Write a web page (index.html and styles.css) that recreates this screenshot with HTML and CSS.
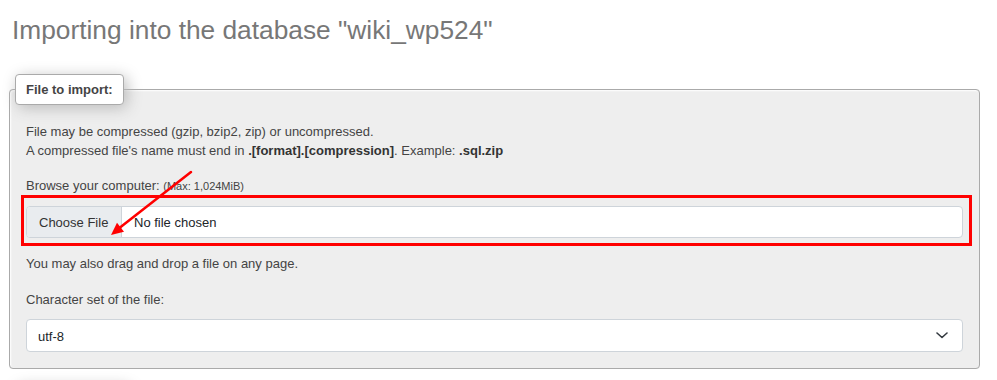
FILE: index.html
```html
<!DOCTYPE html>
<html>
<head>
<meta charset="utf-8">
<link rel="stylesheet" href="styles.css">
</head>
<body>
<div class="page">
  <h2 class="title">Importing into the database "wiki_wp524"</h2>

  <fieldset class="box">
    <legend class="box-legend">File to import:</legend>
    <p class="info">File may be compressed (gzip, bzip2, zip) or uncompressed.<br>A compressed file's name must end in <b>.[format].[compression]</b>. Example: <b>.sql.zip</b></p>

    <div class="field-label">Browse your computer: <small class="max">(Max: 1,024MiB)</small></div>
    <div class="file-wrap">
      <div class="file-input">
        <span class="file-btn">Choose File</span>
        <span class="file-name">No file chosen</span>
      </div>
      <div class="highlight"></div>
    </div>

    <p class="hint">You may also drag and drop a file on any page.</p>

    <div class="field-label charset-label">Character set of the file:</div>
    <div class="select">
      <span class="select-value">utf-8</span>
      <svg class="chevron" width="12" height="7" viewBox="0 0 12 7"><path d="M1 1 L6 5.5 L11 1" fill="none" stroke="#343a40" stroke-width="1.6" stroke-linecap="round" stroke-linejoin="round"/></svg>
    </div>
  </fieldset>

  <fieldset class="box next-box">
    <legend class="box-legend empty-legend"></legend>
    <div class="next-body"></div>
  </fieldset>

  <svg class="arrow" width="997" height="380" viewBox="0 0 997 380">
    <line x1="191" y1="157" x2="120" y2="212.5" stroke="#f00" stroke-width="2.5" stroke-linecap="round"/>
    <polygon points="111,220 124,216.8 117,207.8" fill="#f00"/>
  </svg>
</div>
</body>
</html>
```

FILE: styles.css
```css
html, body {
  margin: 0;
  padding: 0;
  background: #fff;
}

body {
  font-family: "Liberation Sans", Arial, sans-serif;
  font-size: 13px;
  color: #444;
}

.page {
  position: relative;
  padding: 0 17px 0 9px;
}

.title {
  margin: 15px 0 0 3px;
  font-size: 26.3px;
  line-height: 31px;
  font-weight: normal;
  color: #777;
}

.box {
  margin: 28px 0 0 0;
  padding: 0 16px 16px 16px;
  border: 1px solid #aaa;
  border-radius: 4px;
  background: #eee;
  box-shadow: 1px 1px 2px #fff inset;
  min-width: 0;
}

.box-legend {
  margin-left: -11px;
  padding: 0 10px;
  line-height: 29px;
  font-weight: bold;
  color: #444;
  background: #fff;
  border: 1px solid #aaa;
  border-radius: 4px;
  box-shadow: 3px 3px 15px #bbb;
}

.empty-legend {
  width: 90px;
  height: 29px;
}

.info {
  margin: 17px 0 0 0;
  line-height: 19px;
}

.info b {
  color: #333;
}

.field-label {
  margin-top: 16px;
  line-height: 19px;
}

.max {
  font-size: 11px;
}

.file-wrap {
  position: relative;
  margin-top: 10px;
}

.file-input {
  display: flex;
  height: 30px;
  border: 1px solid #ced4da;
  border-radius: 4px;
  background: #fff;
  overflow: hidden;
  color: #212529;
}

.file-btn {
  display: flex;
  align-items: center;
  padding: 0 12px;
  width: 70px;
  background: #e9ecef;
  border-right: 1px solid #ced4da;
  color: #333;
}

.file-name {
  display: flex;
  align-items: center;
  padding-left: 12px;
}

.highlight {
  position: absolute;
  left: -5px;
  right: -9px;
  top: -11px;
  bottom: -8px;
  border: 3px solid #f00;
}

.hint {
  margin: 16px 0 0 0;
  line-height: 19px;
}

.charset-label {
  margin-top: 17px;
}

.select {
  display: flex;
  align-items: center;
  justify-content: space-between;
  margin-top: 10px;
  height: 31px;
  padding: 0 14px 0 11px;
  border: 1px solid #ced4da;
  border-radius: 4px;
  background: #fff;
  color: #212529;
}

.select-value {
  padding-top: 1px;
}

.next-box {
  margin-top: 15px;
}

.next-body {
  height: 40px;
}

.arrow {
  position: absolute;
  left: 0;
  top: 0;
  pointer-events: none;
}
```
